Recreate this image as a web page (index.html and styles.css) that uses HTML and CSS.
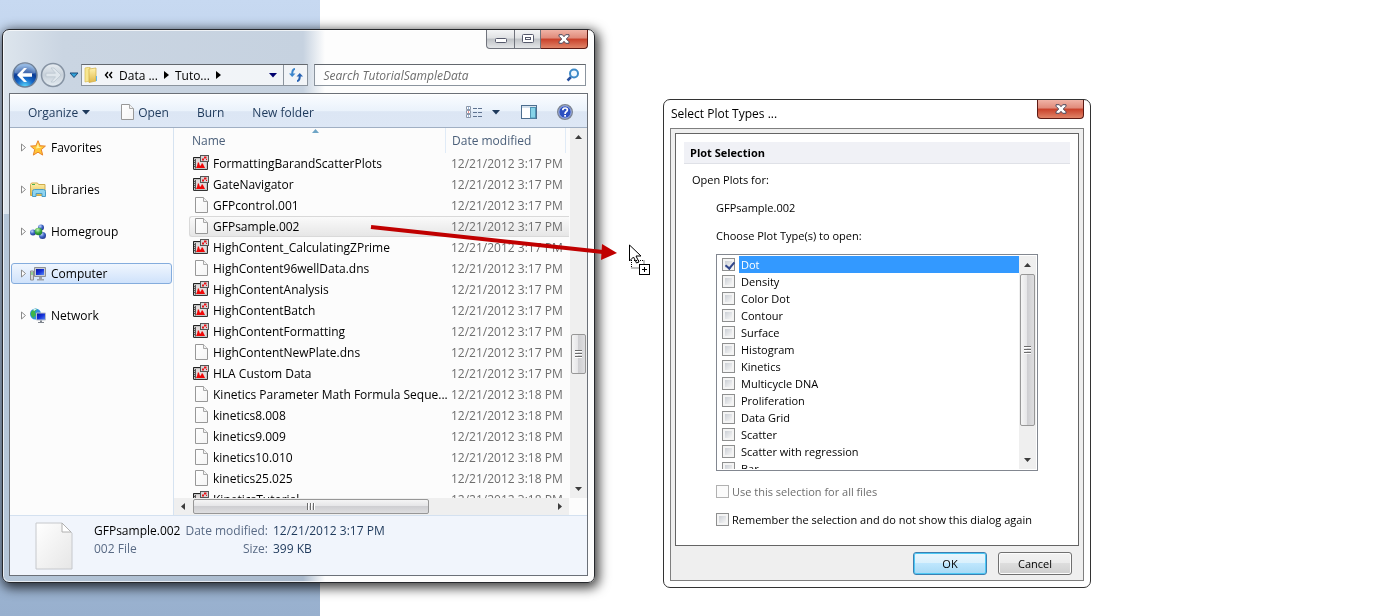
FILE: index.html
```
<!DOCTYPE html>
<html lang="en">
<head>
    <meta charset="UTF-8">
    <meta name="viewport" content="width=device-width, initial-scale=1.0">
    <title>Select Plot Types</title>
    <link rel="stylesheet" href="styles.css">
</head>
<body>
    <!-- shared icons -->
    <svg class="sprite" width="0" height="0" aria-hidden="true">
        <defs>
            <linearGradient id="paper" x1="0" y1="0" x2="1" y2="1">
                <stop offset="0" stop-color="#ffffff"/>
                <stop offset="1" stop-color="#e6e6e6"/>
            </linearGradient>
            <linearGradient id="paperSmall" x1="0" y1="0" x2="1" y2="1">
                <stop offset="0" stop-color="#ffffff"/>
                <stop offset="1" stop-color="#f4f4f4"/>
            </linearGradient>
            <linearGradient id="folder" x1="0" y1="0" x2="0" y2="1">
                <stop offset="0" stop-color="#fff3b0"/>
                <stop offset="1" stop-color="#e0b84a"/>
            </linearGradient>
            <radialGradient id="backBlue" cx="0.5" cy="1" r="0.9">
                <stop offset="0" stop-color="#5ee0ff"/>
                <stop offset="0.4" stop-color="#1668c8"/>
                <stop offset="0.7" stop-color="#0a3a94"/>
                <stop offset="1" stop-color="#6f9fd8"/>
            </radialGradient>
            <linearGradient id="forwardGrey" x1="0" y1="0" x2="0" y2="1">
                <stop offset="0" stop-color="#e9eef3"/>
                <stop offset="0.5" stop-color="#c8d1da"/>
                <stop offset="1" stop-color="#e6edf3"/>
            </linearGradient>
            <radialGradient id="ballBlue" cx="0.35" cy="0.3" r="0.8">
                <stop offset="0" stop-color="#c4d8ff"/>
                <stop offset="0.5" stop-color="#3f66c4"/>
                <stop offset="1" stop-color="#1d2f85"/>
            </radialGradient>
            <radialGradient id="ballGreen" cx="0.4" cy="0.3" r="0.8">
                <stop offset="0" stop-color="#c8f5b8"/>
                <stop offset="0.5" stop-color="#39a83c"/>
                <stop offset="1" stop-color="#14702a"/>
            </radialGradient>
            <linearGradient id="screen" x1="0" y1="0" x2="1" y2="1">
                <stop offset="0" stop-color="#0613a0"/>
                <stop offset="0.5" stop-color="#1530d8"/>
                <stop offset="1" stop-color="#5a8cf5"/>
            </linearGradient>
        </defs>
        <symbol id="file" viewBox="0 0 16 16">
            <path d="M2.500 .5h8l4 4v11h-12z" fill="url(#paperSmall)" stroke="#989898"/>
            <path d="M10.500 .5v4h4" fill="#f2f2f2" stroke="#a8a8a8"/>
        </symbol>
        <symbol id="plot" viewBox="0 0 16 16">
            <path d="M0 2h8v5h6v8H0z" fill="#c4c4c4"/>
            <path d="M.5 14.500v-12h7" fill="none" stroke="#222"/>
            <path d="M1 14.500h13.500V7" fill="none" stroke="#333"/>
            <rect x="3" y="4" width="10" height="9" fill="#e2dcdc"/>
            <path d="M2.500 4v9.500M1 5.500h2M1 7.500h2M1 9.500h2M1 11.500h2" stroke="#555"/>
            <path d="M3 13l1-2 1-4 1 1 1 3 1-1 1-2 1 1 1 2 1 2z" fill="#f00808"/>
            <rect x="7.500" y=".5" width="8" height="6" fill="#d6d6d6" stroke="#555"/>
            <path d="M9 3.500h2v2H9zM11 1.500h2.500v2H11zM13 4h1v1h-1z" fill="#e8141a"/>
        </symbol>
        <symbol id="tri" viewBox="0 0 6 10">
            <path d="M.5 1v7l4-3.500z" fill="#fff" stroke="#8a8a8a"/>
        </symbol>
        <symbol id="down" viewBox="0 0 8 5">
            <path d="M0 0h8L4 4.500z" fill="currentColor"/>
        </symbol>
        <symbol id="cross" viewBox="0 0 12 10">
            <path d="M1 .7h3.300L6 2.700 7.700 .7H11v1.500L8.300 5 11 7.800v1.500H7.700L6 7.300 4.300 9.300H1V7.800L3.700 5 1 2.200z" fill="#fff" stroke="#4e4b5e"/>
        </symbol>
    </svg>

    <div class="wallpaper"></div>

    <main class="desktop">
        <section class="explorer">
            <div class="caption">
                <button class="min" aria-label="Minimize">
                    <svg width="12" height="6"><rect x=".5" y=".5" width="11" height="4" rx="1" fill="#fff" stroke="#55596b"/></svg>
                </button>
                <button class="max" aria-label="Maximize">
                    <svg width="12" height="10"><rect x=".5" y=".5" width="11" height="8" rx="1" fill="#fff" stroke="#55596b"/><rect x="3.500" y="3.500" width="5" height="2" fill="#fff" stroke="#55596b"/></svg>
                </button>
                <button class="close" aria-label="Close"><svg width="12" height="10"><use href="#cross"/></svg></button>
            </div>

            <div class="navrow">
                <div class="history">
                    <button aria-label="Back">
                        <svg width="26" height="26" viewBox="0 0 26 26">
                            <circle cx="13" cy="13" r="12" fill="url(#backBlue)" stroke="#6d7f96" stroke-width="1.500"/>
                            <path d="M2.500 11a10.500 10 0 0 1 21 0q-10 3-21 0z" fill="#fff" opacity=".25"/>
                            <path d="M5 13l7-7h3l-4.500 5.200H20v3.600h-9.500L15 20h-3z" fill="#fff"/>
                        </svg>
                    </button>
                    <button aria-label="Forward">
                        <svg width="26" height="26" viewBox="0 0 26 26">
                            <circle cx="13" cy="13" r="11.500" fill="url(#forwardGrey)" stroke="#8693a3" stroke-width="1.500"/>
                            <path d="M21 13l-7-7h-3l4.500 5.200H6v3.600h9.500L11 20h3z" fill="#dfe6ec" stroke="#b9c4cf" stroke-width=".7"/>
                        </svg>
                    </button>
                    <button aria-label="Recent pages"><svg width="10" height="7" viewBox="0 0 10 7"><path d="M1 1h8L5 5.500z" fill="#2fa2d8" stroke="#1c4a7a"/></svg></button>
                </div>
                <div class="address">
                    <svg width="14" height="16" viewBox="0 0 14 16">
                        <path d="M1 1l5-1v14l-5 1z" fill="#f7e690" stroke="#d9bb55" stroke-width=".7"/>
                        <path d="M5 2l7-1v13l-7 1.500z" fill="url(#folder)" stroke="#d0ac44" stroke-width=".7"/>
                        <path d="M12.500 9v5" stroke="#62b4e8"/>
                    </svg>
                    <svg class="crumb-back" width="9" height="8" viewBox="0 0 9 8"><path d="M4 1L1.500 4 4 7M8 1L5.500 4 8 7" fill="none" stroke="#000" stroke-width="1.400"/></svg>
                    <a href="#">Data ...</a>
                    <svg width="5" height="8"><path d="M0 0l5 4-5 4z"/></svg>
                    <a href="#">Tuto...</a>
                    <svg width="5" height="8"><path d="M0 0l5 4-5 4z"/></svg>
                    <button class="address-drop" aria-label="Previous locations"><svg width="8" height="5"><use href="#down"/></svg></button>
                    <button class="refresh" aria-label="Refresh">
                        <svg width="14" height="14" viewBox="0 0 14 14">
                            <path d="M6 1Q3 1 3.200 7" fill="none" stroke="#3c86cc" stroke-width="2"/>
                            <path d="M0 5.500h6.500L3.200 9z" fill="#3c86cc"/>
                            <path d="M8 13q3 0 2.800-6" fill="none" stroke="#2a64b4" stroke-width="2"/>
                            <path d="M7.500 8.500H14L10.800 5z" fill="#2a64b4"/>
                        </svg>
                    </button>
                </div>
                <div class="search">
                    <input type="text" placeholder="Search TutorialSampleData" aria-label="Search TutorialSampleData">
                    <svg width="14" height="14" viewBox="0 0 14 14">
                        <path d="M1.500 12.500L5 9" stroke="#28509e" stroke-width="2.500"/>
                        <circle cx="8" cy="5.500" r="4" fill="#f2f9ff" stroke="#3e8ac8" stroke-width="2"/>
                    </svg>
                </div>
            </div>

            <div class="frame">
                <div class="toolbar">
                    <button class="organize">Organize <svg width="8" height="5"><use href="#down"/></svg></button>
                    <button class="open"><svg width="16" height="16"><use href="#file"/></svg> Open</button>
                    <button class="burn">Burn</button>
                    <button>New folder</button>
                    <div class="tools">
                        <button class="views" aria-label="Change your view">
                            <svg width="16" height="13" viewBox="0 0 16 13">
                                <path d="M.5 .5h4v3h-4zM.5 4.500h4v3h-4zM.5 8.500h4v3h-4z" fill="#fff" stroke="#8b96a8"/>
                                <path d="M2 2h1M2 10h1" stroke="#3b78c4"/><path d="M2 6h1" stroke="#d22"/>
                                <path d="M7 2.500h4M12 2.500h4M7 6.500h4M12 6.500h4M7 10.500h4M12 10.500h4" stroke="#5f7391"/>
                            </svg>
                            <svg width="8" height="5"><use href="#down"/></svg>
                        </button>
                        <button class="preview" aria-label="Show the preview pane">
                            <svg width="16" height="14" viewBox="0 0 16 14">
                                <rect x=".5" y=".5" width="15" height="13" fill="#fff" stroke="#4c6d8e"/>
                                <path d="M1 2h14" stroke="#a9c3dc"/>
                                <rect x="9.500" y="2.500" width="5" height="10.500" fill="#86d3e8" stroke="#4e94b4"/>
                            </svg>
                        </button>
                        <button aria-label="Help">
                            <svg width="16" height="16" viewBox="0 0 16 16">
                                <circle cx="8" cy="8" r="7.300" fill="#2c4fc0" stroke="#7e8692" stroke-width="1.400"/>
                                <circle cx="8" cy="8" r="6.200" fill="none" stroke="#cfd8ea" stroke-width=".8"/>
                                <path d="M5.800 6.200q0-2.200 2.300-2.200t2.300 2q0 1-1.200 1.800T8.100 10" fill="none" stroke="#fff" stroke-width="1.700"/>
                                <rect x="7.200" y="11" width="1.800" height="1.700" fill="#fff"/>
                            </svg>
                        </button>
                    </div>
                </div>

                <div class="content">
                    <nav class="tree">
                        <a href="#">
                            <svg class="twist" width="6" height="10"><use href="#tri"/></svg>
                            <svg width="16" height="16" viewBox="0 0 16 16"><path d="M8 .7l2.100 5 5.300.4-4.100 3.500 1.400 5.500L8 12.200l-4.700 2.900 1.400-5.500L.6 6.100l5.300-.4z" fill="#ffc637" stroke="#e8842c"/><path d="M8 3l1 4 3 .5-6 1z" fill="#fff3a0"/></svg>
                            Favorites
                        </a>
                        <a href="#">
                            <svg class="twist" width="6" height="10"><use href="#tri"/></svg>
                            <svg width="16" height="16" viewBox="0 0 16 16">
                                <path d="M.5 2.500l1-1.500h6l1 1.500h6.500v11H.5z" fill="url(#folder)" stroke="#cfac4c"/>
                                <path d="M2 2.500h3" stroke="#4db04f"/>
                                <path d="M2.500 14.500v-5q0-2 2-2h9q2 0 2 2v5h-3.500v-3H6v3z" fill="#8fd4f0" stroke="#4a9cc6"/>
                            </svg>
                            Libraries
                        </a>
                        <a href="#">
                            <svg class="twist" width="6" height="10"><use href="#tri"/></svg>
                            <svg width="16" height="16" viewBox="0 0 16 16">
                                <circle cx="11" cy="3.500" r="3" fill="url(#ballBlue)"/>
                                <circle cx="3" cy="8.500" r="3" fill="url(#ballBlue)"/>
                                <circle cx="12.500" cy="11.500" r="3.500" fill="url(#ballBlue)"/>
                                <circle cx="8.500" cy="7.500" r="3.800" fill="url(#ballGreen)"/>
                            </svg>
                            Homegroup
                        </a>
                        <a href="#" class="selected">
                            <svg class="twist" width="6" height="10"><use href="#tri"/></svg>
                            <svg width="16" height="16" viewBox="0 0 16 16">
                                <path d="M.5 5h3v9h-3z" fill="#d6d6d6" stroke="#8e8e8e"/><path d="M2 6v3" stroke="#50c850"/>
                                <path d="M4.500 1.500h11v9h-11z" fill="#c8ccd2" stroke="#8c9096"/>
                                <path d="M6 3h8v6H6z" fill="url(#screen)"/>
                                <path d="M9 11h3v2h2v1.500H7V13h2z" fill="#9ea2a8"/>
                            </svg>
                            Computer
                        </a>
                        <a href="#">
                            <svg class="twist" width="6" height="10"><use href="#tri"/></svg>
                            <svg width="16" height="16" viewBox="0 0 16 16">
                                <circle cx="5.500" cy="6" r="5.500" fill="#2f8fdc"/>
                                <path d="M1 4q3-4 6-3L5 4l1 3-3 3Q0 7 1 4z" fill="#3db548"/>
                                <path d="M3 1.500q2-1 4-.5L4 3z" fill="#d5f5ff"/>
                                <path d="M6.500 5h9v7h-9z" fill="url(#screen)" stroke="#b9bfca"/>
                                <path d="M10 12.500h2V14h2v1H8v-1h2z" fill="#7f858e"/>
                            </svg>
                            Network
                        </a>
                    </nav>

                    <div class="listing">
                        <div class="rows">
                            <table>
                                <thead>
                                    <tr><th class="name-col">Name<svg width="7" height="4" viewBox="0 0 7 4"><path d="M3.500 0L7 4H0z" fill="#6fa5c6"/></svg></th><th class="date-col">Date modified</th></tr>
                                </thead>
                                <tbody>
                                    <tr><td><svg width="16" height="16"><use href="#plot"/></svg>FormattingBarandScatterPlots</td><td>12/21/2012 3:17 PM</td></tr>
                                    <tr><td><svg width="16" height="16"><use href="#plot"/></svg>GateNavigator</td><td>12/21/2012 3:17 PM</td></tr>
                                    <tr><td><svg width="16" height="16"><use href="#file"/></svg>GFPcontrol.001</td><td>12/21/2012 3:17 PM</td></tr>
                                    <tr class="picked"><td><svg width="16" height="16"><use href="#file"/></svg>GFPsample.002</td><td>12/21/2012 3:17 PM</td></tr>
                                    <tr><td><svg width="16" height="16"><use href="#plot"/></svg>HighContent_CalculatingZPrime</td><td>12/21/2012 3:17 PM</td></tr>
                                    <tr><td><svg width="16" height="16"><use href="#file"/></svg>HighContent96wellData.dns</td><td>12/21/2012 3:17 PM</td></tr>
                                    <tr><td><svg width="16" height="16"><use href="#plot"/></svg>HighContentAnalysis</td><td>12/21/2012 3:17 PM</td></tr>
                                    <tr><td><svg width="16" height="16"><use href="#plot"/></svg>HighContentBatch</td><td>12/21/2012 3:17 PM</td></tr>
                                    <tr><td><svg width="16" height="16"><use href="#plot"/></svg>HighContentFormatting</td><td>12/21/2012 3:17 PM</td></tr>
                                    <tr><td><svg width="16" height="16"><use href="#file"/></svg>HighContentNewPlate.dns</td><td>12/21/2012 3:17 PM</td></tr>
                                    <tr><td><svg width="16" height="16"><use href="#plot"/></svg>HLA Custom Data</td><td>12/21/2012 3:17 PM</td></tr>
                                    <tr><td><svg width="16" height="16"><use href="#file"/></svg>Kinetics Parameter Math Formula Seque...</td><td>12/21/2012 3:18 PM</td></tr>
                                    <tr><td><svg width="16" height="16"><use href="#file"/></svg>kinetics8.008</td><td>12/21/2012 3:18 PM</td></tr>
                                    <tr><td><svg width="16" height="16"><use href="#file"/></svg>kinetics9.009</td><td>12/21/2012 3:18 PM</td></tr>
                                    <tr><td><svg width="16" height="16"><use href="#file"/></svg>kinetics10.010</td><td>12/21/2012 3:18 PM</td></tr>
                                    <tr><td><svg width="16" height="16"><use href="#file"/></svg>kinetics25.025</td><td>12/21/2012 3:18 PM</td></tr>
                                    <tr><td><svg width="16" height="16"><use href="#plot"/></svg>KineticsTutorial</td><td>12/21/2012 3:18 PM</td></tr>
                                </tbody>
                            </table>
                        </div>
                        <div class="vscroll">
                            <svg width="7" height="4"><path d="M3.500 0L7 4H0z"/></svg>
                            <div class="thumb"><span class="grip"></span></div>
                            <svg width="7" height="4"><path d="M0 0h7L3.500 4z"/></svg>
                        </div>
                        <div class="hscroll">
                            <svg width="4" height="7"><path d="M4 0v7L0 3.500z"/></svg>
                            <div class="thumb"><span class="grip"></span></div>
                            <svg width="4" height="7"><path d="M0 0l4 3.500L0 7z"/></svg>
                        </div>
                    </div>
                </div>

                <footer class="details">
                    <svg width="38" height="48" viewBox="0 0 38 48">
                        <path d="M1 1h26l10 10v36H1z" fill="url(#paper)" stroke="#c6c8cc"/>
                        <path d="M27 1v9h9z" fill="#fff" stroke="#b0b0b0"/>
                    </svg>
                    <div class="facts">
                        <span class="file-name">GFPsample.002</span>
                        <span class="key">Date modified:</span>
                        <span class="val">12/21/2012 3:17 PM</span>
                        <span class="kind">002 File</span>
                        <span class="key">Size:</span>
                        <span class="val">399 KB</span>
                    </div>
                </footer>
            </div>
        </section>

        <section class="dialog">
            <header>
                <h1>Select Plot Types ...</h1>
                <button class="close" aria-label="Close"><svg width="12" height="10"><use href="#cross"/></svg></button>
            </header>
            <form class="dialog-frame">
                <div class="panel">
                    <h2>Plot Selection</h2>
                    <p>Open Plots for:</p>
                    <div class="inset">
                        <p>GFPsample.002</p>
                        <p>Choose Plot Type(s) to open:</p>
                        <div class="listbox">
                            <div class="options">
                                <label class="on"><input type="checkbox" checked><span>Dot</span></label>
                                <label><input type="checkbox"><span>Density</span></label>
                                <label><input type="checkbox"><span>Color Dot</span></label>
                                <label><input type="checkbox"><span>Contour</span></label>
                                <label><input type="checkbox"><span>Surface</span></label>
                                <label><input type="checkbox"><span>Histogram</span></label>
                                <label><input type="checkbox"><span>Kinetics</span></label>
                                <label><input type="checkbox"><span>Multicycle DNA</span></label>
                                <label><input type="checkbox"><span>Proliferation</span></label>
                                <label><input type="checkbox"><span>Data Grid</span></label>
                                <label><input type="checkbox"><span>Scatter</span></label>
                                <label><input type="checkbox"><span>Scatter with regression</span></label>
                                <label><input type="checkbox"><span>Bar</span></label>
                            </div>
                            <div class="vscroll">
                                <svg width="7" height="4"><path d="M3.500 0L7 4H0z"/></svg>
                                <div class="thumb"><span class="grip"></span></div>
                                <svg width="7" height="4"><path d="M0 0h7L3.500 4z"/></svg>
                            </div>
                        </div>
                        <label class="choice off"><input type="checkbox" disabled> Use this selection for all files</label>
                        <label class="choice"><input type="checkbox"> Remember the selection and do not show this dialog again</label>
                    </div>
                </div>
                <div class="actions">
                    <button type="button" class="ok">OK</button>
                    <button type="button">Cancel</button>
                </div>
            </form>
        </section>
    </main>

    <!-- drag arrow and copy cursor over both windows -->
    <svg class="drag" width="290" height="60" viewBox="0 0 290 60">
        <path d="M1 7l232 25" stroke="#c00000" stroke-width="4"/>
        <path d="M232 24L247 33 231 40z" fill="#c00000"/>
        <path d="M259.500 25v16l4-4 3 6 2.500-1-3-6h5z" fill="#fff" stroke="#000"/>
        <path d="M261.500 40v8h8M264 40.500h10v3" fill="none" stroke="#000" stroke-dasharray="1 1"/>
        <rect x="269.500" y="44.500" width="10" height="10" fill="#fff" stroke="#000"/>
        <path d="M272 49.500h5M274.500 47v5" stroke="#000"/>
    </svg>
</body>
</html>
```
FILE: styles.css
```
* {
    box-sizing: border-box;
}

body {
    margin: 0;
    background: #fff;
    font-family: "Open Sans", "Noto Sans", sans-serif;
    font-size: 12px;
    line-height: 21px;
    color: #000;
}

svg {
    flex: none;
    display: block;
}

button {
    font: inherit;
    color: inherit;
    background: none;
    border: none;
    padding: 0;
    margin: 0;
    display: flex;
    align-items: center;
    justify-content: center;
}

a {
    color: inherit;
    text-decoration: none;
}

.sprite {
    position: absolute;
}

.wallpaper {
    position: fixed;
    top: 0;
    bottom: 0;
    left: 0;
    width: 320px;
    background: linear-gradient(#c7d9f1, #98b0ce);
}

/* windows */

.desktop {
    position: relative;
    display: grid;
    grid-template-columns: 593fr 428fr 214fr;
    gap: 68px;
    align-items: start;
    padding: 29px 2px;
}

.explorer {
    border: 1px solid #26282c;
    border-radius: 7px;
    padding: 0 6px 6px;
    background: linear-gradient(90deg, #dde5ed 0, #cad5e2 60px, #c6d2e0 300px, #fdfdfd 322px) no-repeat 0 0 / 100% 184px,
        linear-gradient(90deg, #b5c6d8 0, #a9b9cc 300px, #fdfdfd 322px);
    box-shadow: inset 0 0 0 1px rgba(255, 255, 255, 0.7), 2px 3px 12px 2px rgba(0, 0, 0, 0.75);
}

.caption {
    display: flex;
    justify-content: flex-end;
    height: 34px;
    align-items: flex-start;
}

.caption button,
.close {
    height: 19px;
    border: 1px solid #70737c;
    border-top: none;
    background: linear-gradient(#f4f5f6, #dfe1e3 45%, #bfc2c6 50%, #e4e6e8);
}

.caption .min {
    width: 29px;
    border-radius: 0 0 0 4px;
    padding-top: 4px;
}

.caption .max {
    width: 26px;
    border-left: none;
}

.close,
.caption .close {
    width: 47px;
    border-color: #5c1a14;
    border-radius: 0 0 4px 4px;
    background: linear-gradient(#f0b3a6, #e08a7a 45%, #c9402a 50%, #e08468);
}

.caption .close {
    border-left: none;
    border-radius: 0 0 4px 0;
}

.navrow {
    display: flex;
    align-items: center;
    height: 22px;
    padding: 0 2px 0 3px;
}

.history {
    display: flex;
    align-items: center;
    gap: 2px;
    width: 69px;
    flex: none;
}

.history button:last-child {
    margin-left: 1px;
}

.address,
.search {
    display: flex;
    align-items: center;
    height: 22px;
    border: 1px solid #8b949e;
    border-top-color: #63686e;
    background: rgba(255, 255, 255, 0.75);
}

.address {
    flex: 223 1 0;
    gap: 6px;
    padding-left: 2px;
}

.address button {
    align-self: stretch;
}

.address-drop {
    margin-left: auto;
    color: #00006e;
}

.refresh {
    width: 24px;
    border-left: 1px solid #8b949e;
}

.search {
    flex: 256 1 0;
    margin-left: 6px;
    padding: 0 5px 0 8px;
}

.search input {
    flex: 1;
    min-width: 0;
    border: none;
    outline: none;
    padding: 0;
    background: none;
    font: inherit;
    font-style: italic;
}

.search input::placeholder {
    color: #6d6d6d;
    opacity: 1;
}

.frame {
    margin-top: 7px;
    border: 1px solid #6b7078;
    background: #fcfcfc;
}

.toolbar {
    display: flex;
    align-items: center;
    height: 34px;
    padding: 2px 14px 0 18px;
    color: #1e395b;
    border-top: 1px solid #fff;
    border-bottom: 1px solid #a0afc3;
    background: linear-gradient(#fafcff, #eaf2fb 50%, #dce6f4 52%, #dde7f5);
}

.organize {
    gap: 4px;
    margin-right: 29px;
}

.open {
    gap: 3px;
    margin-right: 28px;
}

.burn {
    margin-right: 28px;
}

.tools {
    display: flex;
    align-items: center;
    margin-left: auto;
}

.views {
    gap: 10px;
    margin-right: 21px;
}

.preview {
    margin-right: 20px;
}

.content {
    display: flex;
    height: 387px;
}

.tree {
    flex: none;
    display: flex;
    flex-direction: column;
    gap: 21px;
    width: 164px;
    padding: 9px 1px;
    border-right: 1px solid #d6e3f1;
}

.tree a {
    display: flex;
    align-items: center;
    height: 21px;
    padding-left: 9px;
    border: 1px solid transparent;
    border-radius: 3px;
    gap: 5px;
}

.tree .twist {
    margin-right: -2px;
}

.tree .selected {
    border-color: #84acdd;
    background: linear-gradient(#f0f6fe, #cfe2fb);
}

.listing {
    flex: 1;
    min-width: 0;
    display: grid;
    grid-template-columns: 1fr 17px;
    grid-template-rows: 370px 17px;
    column-gap: 1px;
}

.rows {
    overflow: hidden;
    padding-left: 15px;
}

table {
    width: 100%;
    border-collapse: separate;
    border-spacing: 0;
    table-layout: fixed;
}

th {
    position: relative;
    height: 25px;
    padding: 0 0 0 3px;
    text-align: left;
    font-weight: normal;
    color: #4c607a;
}

th svg {
    position: absolute;
    top: 1px;
    left: 48%;
}

.date-col {
    width: 124px;
    padding-left: 6px;
    border-left: 1px solid #e0ebf7;
    background: linear-gradient(#e0ebf7, #e0ebf7) no-repeat 119px 0 / 1px 100%;
}

td {
    height: 21px;
    padding: 0 0 0 4px;
    line-height: 19px;
    white-space: nowrap;
    border: 1px solid transparent;
    border-width: 1px 0;
}

td svg {
    float: left;
    margin: 1px 4px 0 0;
}

td + td {
    color: #6d6d6d;
    padding-left: 6px;
}

.picked td {
    border-color: #d9d9d9;
    background: linear-gradient(#fafafa, #e6e6e6);
}

.picked td:first-child {
    border-left: 1px solid #d9d9d9;
    border-radius: 3px 0 0 3px;
    padding-left: 3px;
}

/* scrollbars */

.vscroll,
.hscroll {
    display: flex;
    align-items: center;
    justify-content: space-between;
    background: #efefef;
    fill: #3c3c3c;
}

.vscroll {
    flex-direction: column;
    padding: 7px 0;
}

.hscroll {
    padding: 0 7px;
}

.thumb {
    display: flex;
    align-items: center;
    justify-content: center;
    border: 1px solid #979797;
    border-radius: 2px;
}

.vscroll .thumb {
    width: 15px;
    background: linear-gradient(90deg, #f5f5f5, #e6e6e8 45%, #cfcfd2 50%, #dedee0);
}

.hscroll .thumb {
    height: 15px;
    background: linear-gradient(#f5f5f5, #e6e6e8 45%, #cfcfd2 50%, #dedee0);
}

.listing .vscroll .thumb {
    height: 40px;
    margin-top: 188px;
    margin-bottom: 106px;
}

.listing .hscroll .thumb {
    width: 62%;
    margin-right: auto;
    margin-left: 8px;
}

.grip {
    width: 8px;
    height: 7px;
    background: repeating-linear-gradient(90deg, #6c6c6c 0 1px, #fff 1px 2px, transparent 2px 3px);
}

.vscroll .grip {
    width: 7px;
    height: 8px;
    background: repeating-linear-gradient(#6c6c6c 0 1px, #fff 1px 2px, transparent 2px 3px);
}

.details {
    display: flex;
    height: 60px;
    padding: 6px 0 0 25px;
    gap: 21px;
    background: #f1f5fc;
    border-top: 1px solid #d4e1f0;
}

.facts {
    display: grid;
    grid-template-columns: auto auto auto;
    grid-auto-rows: 18px;
    column-gap: 5px;
    line-height: 18px;
    color: #1e395b;
}

.file-name {
    color: #000;
}

.key,
.kind {
    color: #5a6b85;
}

.key {
    text-align: right;
}

/* plot type dialog */

.dialog {
    margin-top: 70px;
    border: 1px solid #333;
    border-radius: 7px;
    padding: 0 6px 6px;
    background: #fff;
    line-height: 17px;
}

.dialog header {
    display: flex;
    justify-content: space-between;
    height: 28px;
}

h1 {
    margin: 0;
    padding: 5px 0 0 1px;
    font-size: 12px;
    font-weight: normal;
}

.dialog-frame {
    border: 1px solid #7f7f7f;
    padding: 4px 4px 5px;
    background: #efefef;
    font-size: 11px;
}

.panel {
    height: 413px;
    padding: 8px;
    border: 1px solid #646464;
    background: #fff;
}

h2 {
    margin: 0;
    padding: 2px 6px;
    font-size: 11px;
    line-height: 17px;
    border-bottom: 1px solid #dfe1e7;
    background: #f0f1f6;
}

.panel p {
    margin: 0 0 11px;
}

.panel > p {
    margin-top: 7px;
    padding-left: 8px;
}

.inset {
    padding: 0 32px;
}

.inset p:nth-child(2) {
    margin-bottom: 10px;
}

.listbox {
    display: flex;
    height: 217px;
    border: 1px solid #828790;
    padding: 1px;
    margin-bottom: 12px;
}

.options {
    flex: 1;
    overflow: hidden;
    padding-left: 4px;
}

.options label {
    display: flex;
    align-items: center;
    gap: 4px;
    height: 17px;
}

.options span {
    flex: 1;
    padding-left: 2px;
}

.options .on span {
    background: #3399ff;
    color: #fff;
}

.listbox .vscroll {
    width: 17px;
}

.listbox .thumb {
    flex: 1;
    margin: 7px 0 32px;
}

input[type="checkbox"] {
    appearance: none;
    flex: none;
    width: 13px;
    height: 13px;
    margin: 0;
    border: 1px solid #8e8f8f;
    background: linear-gradient(135deg, #cbcfd5, #f6f6f6) content-box, #f4f4f4;
    padding: 2px;
}

input[type="checkbox"]:checked::before {
    content: "";
    display: block;
    width: 4px;
    height: 7px;
    margin: -1px 0 0 2px;
    border: solid #31478c;
    border-width: 0 2px 2px 0;
    transform: rotate(40deg);
}

input[type="checkbox"]:disabled {
    border-color: #b1b1b1;
    background: #fbfbfb;
}

.choice {
    display: flex;
    align-items: center;
    gap: 3px;
    height: 17px;
    margin-bottom: 11px;
    white-space: nowrap;
}

.off {
    color: #6d6d6d;
}

.actions {
    display: flex;
    justify-content: flex-end;
    gap: 11px;
    padding: 6px 7px 0 0;
}

.actions button {
    width: 74px;
    height: 23px;
    border: 1px solid #707070;
    border-radius: 3px;
    background: linear-gradient(#f2f2f2, #ebebeb 50%, #dddddd 50%, #cfcfcf);
    box-shadow: inset 0 0 0 1px #fcfcfc;
}

.actions .ok {
    border-color: #3c7fb1;
    background: linear-gradient(#eaf6fd, #d9f0fc 50%, #bee6fd 50%, #a7d9f5);
    box-shadow: inset 0 0 0 1px #4cc8f4;
}

.drag {
    position: absolute;
    top: 220px;
    left: 370px;
}
```
